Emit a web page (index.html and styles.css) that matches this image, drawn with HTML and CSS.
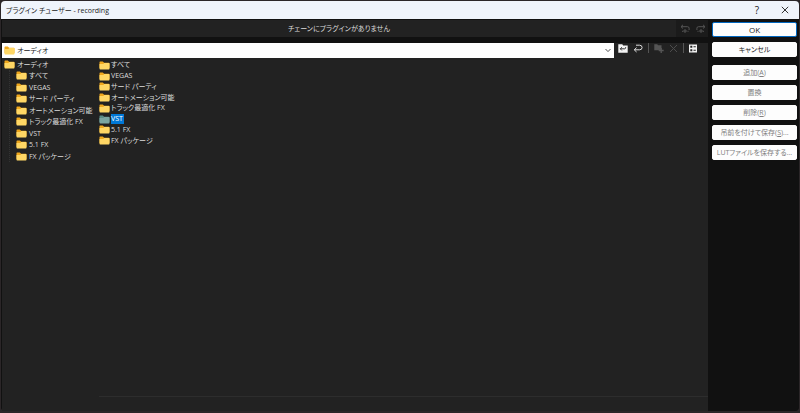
FILE: index.html
```html
<!DOCTYPE html>
<html lang="ja">
<head>
  <meta charset="UTF-8">
  <meta name="viewport" content="width=device-width, initial-scale=1.0">
  <title>プラグイン チューザー - recording</title>
  <link rel="stylesheet" href="styles.css">
</head>
<body>

  <!-- Folder icon shared by the combo, tree and list -->
  <svg class="defs" aria-hidden="true">
    <symbol id="folder" viewBox="0 0 11 9">
      <path d="M.5 1.2Q.5.5 1.2.5h2.6l1.3 1.2h4.7q.7 0 .7.7V7H.5z" fill="#f0a81c"/>
      <path d="M.5 3h3.8l1-.9h4.5q.7 0 .7.7v5q0 .7-.7.7H1.2q-.7 0-.7-.7z" fill="#ffd765"/>
    </symbol>
    <symbol id="folder-selected" viewBox="0 0 11 9">
      <path d="M.5 1.2Q.5.5 1.2.5h2.6l1.3 1.2h4.7q.7 0 .7.7V7H.5z" fill="#5b8c86"/>
      <path d="M.5 3h3.8l1-.9h4.5q.7 0 .7.7v5q0 .7-.7.7H1.2q-.7 0-.7-.7z" fill="#7aa5a1"/>
    </symbol>
  </svg>

  <div class="window">
    <header class="titlebar">
      <h1>プラグイン チューザー - recording</h1>
      <button class="title-btn" type="button" aria-label="ヘルプ">?</button>
      <button class="title-btn" type="button" aria-label="閉じる">
        <svg width="8" height="8" viewBox="0 0 8 8"><path d="M.8.8l6.4 6.4M7.2.8L.8 7.2" stroke="#333" fill="none"/></svg>
      </button>
    </header>

    <div class="content">
      <main class="main">
        <div class="chain">
          <p>チェーンにプラグインがありません</p>
          <div class="chain-tools">
            <button type="button" aria-label="左へ移動" disabled>
              <svg width="10" height="9" viewBox="0 0 10 9"><path d="M3 .8L1 2.7l2 1.8M1.2 2.7h6.3q1.6 0 1.6 1.5V6M2 7.3h1M4 6h2v2H4zM7.5 7.3h1" stroke="#555" fill="none"/></svg>
            </button>
            <button type="button" aria-label="右へ移動" disabled>
              <svg width="10" height="9" viewBox="0 0 10 9"><path d="M7 .8l2 1.9-2 1.8M8.8 2.7H2.5Q.9 2.7.9 4.2V6M1.5 7.3h1M4 6h2v2H4zM7 7.3h1" stroke="#555" fill="none"/></svg>
            </button>
          </div>
        </div>

        <div class="toolbar">
          <div class="combo">
            <svg class="folder"><use href="#folder"/></svg>
            <select aria-label="フォルダ">
              <option>オーディオ</option>
            </select>
            <svg class="chevron" width="6" height="5" viewBox="0 0 6 5"><path d="M.5 1L3 3.6 5.5 1" stroke="#555" fill="none"/></svg>
          </div>
          <div class="tools">
            <button type="button" aria-label="1つ上のフォルダ">
              <svg width="10" height="9" viewBox="0 0 10 9"><path d="M.3.3h4l.8 1.2h4.6v7.2H.3z" fill="#f2f2f2"/><path d="M3.8 3.2L2.3 4.8l1.5 1.6M2.5 4.8h4.2q1 0 1-1.6" stroke="#222" stroke-width=".9" fill="none"/></svg>
            </button>
            <button type="button" aria-label="戻る">
              <svg width="10" height="9" viewBox="0 0 10 9"><path d="M3.6 3.6L1.2 5.8l2.4 2.2M1.5 5.8h5q2.6 0 2.6-2.3T6.5 1.2H3" stroke="#ddd" fill="none"/></svg>
            </button>
            <span class="separator"></span>
            <button type="button" aria-label="新しいフォルダ" disabled>
              <svg width="10" height="9" viewBox="0 0 10 9"><path d="M.3.3h3l.7 1h3.5v5H.3z" fill="#555"/><path d="M7.2 4v5M4.7 6.5h5" stroke="#555" stroke-width="1.4"/></svg>
            </button>
            <button type="button" aria-label="削除" disabled>
              <svg width="9" height="9" viewBox="0 0 9 9"><path d="M1 1l7 7M8 1L1 8" stroke="#4c4c4c"/></svg>
            </button>
            <span class="separator"></span>
            <button type="button" aria-label="表示">
              <svg width="8" height="9" viewBox="0 0 8 9"><path d="M0 .5h8v8H0z" fill="#f2f2f2"/><path d="M1.3 1.7h2v2h-2zM1.3 5.3h2v2h-2zM4.5 2.2h2.3v1H4.5zM4.5 5.8h2.3v1H4.5z" fill="#222"/></svg>
            </button>
          </div>
        </div>

        <div class="browser">
          <div class="tree">
            <div class="item"><svg class="folder"><use href="#folder"/></svg>オーディオ</div>
            <ul>
              <li class="item"><svg class="folder"><use href="#folder"/></svg>すべて</li>
              <li class="item"><svg class="folder"><use href="#folder"/></svg>VEGAS</li>
              <li class="item"><svg class="folder"><use href="#folder"/></svg>サード パーティ</li>
              <li class="item"><svg class="folder"><use href="#folder"/></svg>オートメーション可能</li>
              <li class="item"><svg class="folder"><use href="#folder"/></svg>トラック最適化 FX</li>
              <li class="item"><svg class="folder"><use href="#folder"/></svg>VST</li>
              <li class="item"><svg class="folder"><use href="#folder"/></svg>5.1 FX</li>
              <li class="item"><svg class="folder"><use href="#folder"/></svg>FX パッケージ</li>
            </ul>
          </div>
          <div class="files">
            <ul>
              <li class="item"><svg class="folder"><use href="#folder"/></svg>すべて</li>
              <li class="item"><svg class="folder"><use href="#folder"/></svg>VEGAS</li>
              <li class="item"><svg class="folder"><use href="#folder"/></svg>サード パーティ</li>
              <li class="item"><svg class="folder"><use href="#folder"/></svg>オートメーション可能</li>
              <li class="item"><svg class="folder"><use href="#folder"/></svg>トラック最適化 FX</li>
              <li class="item selected"><svg class="folder"><use href="#folder-selected"/></svg><span>VST</span></li>
              <li class="item"><svg class="folder"><use href="#folder"/></svg>5.1 FX</li>
              <li class="item"><svg class="folder"><use href="#folder"/></svg>FX パッケージ</li>
            </ul>
            <div class="description"></div>
          </div>
        </div>
      </main>

      <aside class="actions">
        <div class="group">
          <button class="btn primary" type="button">OK</button>
          <button class="btn" type="button">キャンセル</button>
        </div>
        <div class="group">
          <button class="btn" type="button" disabled>追加(<u>A</u>)</button>
          <button class="btn" type="button" disabled>置換</button>
          <button class="btn" type="button" disabled>削除(<u>R</u>)</button>
          <button class="btn" type="button" disabled>吊前を付けて保存(<u>S</u>)...</button>
          <button class="btn" type="button" disabled>LUTファイルを保存する...</button>
        </div>
      </aside>
    </div>
  </div>

</body>
</html>
```

FILE: styles.css
```css
* {
  box-sizing: border-box;
}

body {
  margin: 0;
  background: #2b2628;
  color: #dcdcdc;
  font-family: "Open Sans", "Noto Sans CJK JP", sans-serif;
  font-size: 7px;
  line-height: 11px;
  font-feature-settings: "palt";
}

h1, p, ul {
  margin: 0;
  padding: 0;
  font-size: 7px;
  font-weight: normal;
  list-style: none;
}

button, select {
  margin: 0;
  padding: 0;
  border: none;
  background: none;
  color: inherit;
  font: inherit;
  font-feature-settings: inherit;
}

svg {
  display: block;
  flex: none;
}

.defs {
  position: absolute;
  width: 0;
  height: 0;
}

.window {
  display: flex;
  flex-direction: column;
  min-height: 100vh;
  padding: 1px 1px 2px;
}

/* Title bar */
.titlebar {
  display: flex;
  align-items: center;
  height: 18px;
  padding-left: 5px;
  background: #eff4fb;
  border-radius: 4px 4px 0 0;
  color: #222;
}

.titlebar h1 {
  flex: 1;
}

.title-btn {
  display: flex;
  align-items: center;
  justify-content: center;
  width: 28px;
  height: 18px;
  font-size: 10px;
}

.content {
  display: flex;
  flex: 1;
  background: #111;
  border: 1px solid #111;
  border-bottom: none;
  border-radius: 0 0 4px 4px;
}

.main {
  display: flex;
  flex: 1;
  flex-direction: column;
}

/* Chain bar */
.chain {
  display: flex;
  align-items: center;
  height: 17px;
  background: #222;
}

.chain p {
  flex: 1;
  text-align: center;
}

.chain-tools {
  display: flex;
  align-items: center;
  gap: 6px;
  height: 17px;
  padding: 0 2px 0 4px;
  background: #1b1b1b;
}

/* Folder combo and tools */
.toolbar {
  display: flex;
  margin-top: 6px;
  background: #222;
}

.combo {
  display: flex;
  flex: 1;
  align-items: center;
  height: 15px;
  padding: 0 3px 0 2px;
  background: #fff;
  color: #222;
}

.combo select {
  flex: 1;
  height: 15px;
  padding-left: 2px;
  appearance: none;
}

.tools {
  display: flex;
  align-items: center;
  height: 10px;
  gap: 5px;
  width: 94px;
  padding-left: 4px;
}

.separator {
  width: 1px;
  height: 10px;
  background: #555;
}

/* Folder tree and list */
.browser {
  display: flex;
  flex: 1;
  background: #222;
}

.tree {
  width: 97px;
  padding: 1px 0 0 2px;
}

.tree ul {
  display: grid;
  grid-auto-rows: 1fr;
  height: 92px;
  margin-left: 5px;
  padding-left: 6px;
  border-left: 1px dotted #333;
}

.files {
  display: flex;
  flex: 1;
  flex-direction: column;
  padding-top: 2px;
}

.files ul {
  display: grid;
  flex: none;
  grid-auto-rows: 1fr;
  height: 86px;
}

.item {
  display: flex;
  align-items: center;
  gap: 2px;
  white-space: nowrap;
}

.files .item {
  gap: 1px;
  line-height: 10px;
}

.folder {
  width: 11px;
  height: 9px;
}

.selected span {
  padding-right: 1px;
  background: #0078d7;
  color: #fff;
}

.description {
  height: 15px;
  margin-top: auto;
  border-top: 1px solid #2d2d2d;
}

/* Buttons on the right */
.actions {
  display: flex;
  flex-direction: column;
  gap: 8px;
  width: 90px;
  padding: 2px 1px 0 4px;
}

.group {
  display: flex;
  flex-direction: column;
  gap: 5px;
}

.btn {
  height: 15px;
  border: 1px solid #fdfdfd;
  border-radius: 2px;
  background: #fdfdfd;
  color: #222;
  line-height: 12px;
  white-space: nowrap;
}

.btn:disabled {
  color: #808080;
}

.btn.primary {
  border-color: #0067c0;
  font-size: 8px;
}
```
